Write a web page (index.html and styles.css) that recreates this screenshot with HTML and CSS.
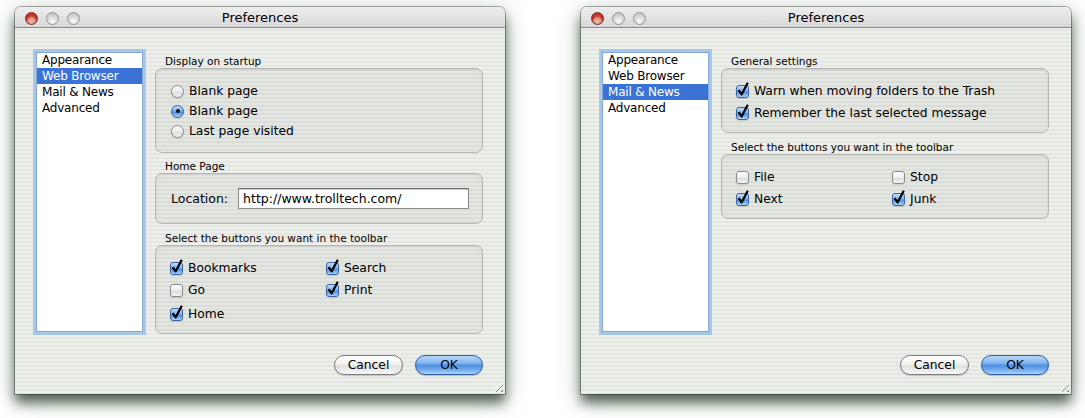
FILE: index.html
```html
<!DOCTYPE html>
<html>
<head>
<meta charset="utf-8">
<title>Preferences</title>
<link rel="stylesheet" href="styles.css">
</head>
<body>
<div class="desk">
  <div class="window">
    <div class="titlebar">
      <div class="lights"><span class="light close"></span><span class="light"></span><span class="light"></span></div>
      <div class="title">Preferences</div>
      <div></div>
    </div>
    <div class="body">
      <div class="main">
        <ul class="list">
          <li>Appearance</li>
          <li class="sel">Web Browser</li>
          <li>Mail &amp; News</li>
          <li>Advanced</li>
        </ul>
        <div class="pane">
          <div class="glabel first">Display on startup</div>
          <div class="group g-startup">
            <div class="opt"><span class="radio"></span>Blank page</div>
            <div class="opt"><span class="radio on"></span>Blank page</div>
            <div class="opt"><span class="radio"></span>Last page visited</div>
          </div>
          <div class="glabel">Home Page</div>
          <div class="group g-home">
            <span class="loc">Location:</span>
            <input class="field" type="text" value="http://www.trolltech.com/">
          </div>
          <div class="glabel l3">Select the buttons you want in the toolbar</div>
          <div class="group g-tools">
            <div class="opt c"><span class="cb on"><svg class="tick" width="14" height="16" viewBox="0 0 14 16"><path d="M2.6 8.2 L5.6 12.4 L11.8 0.8" fill="none" stroke="#000" stroke-width="2.2" stroke-linejoin="round"/></svg></span>Bookmarks</div>
            <div class="opt c"><span class="cb on"><svg class="tick" width="14" height="16" viewBox="0 0 14 16"><path d="M2.6 8.2 L5.6 12.4 L11.8 0.8" fill="none" stroke="#000" stroke-width="2.2" stroke-linejoin="round"/></svg></span>Search</div>
            <div class="opt c"><span class="cb"></span>Go</div>
            <div class="opt c"><span class="cb on"><svg class="tick" width="14" height="16" viewBox="0 0 14 16"><path d="M2.6 8.2 L5.6 12.4 L11.8 0.8" fill="none" stroke="#000" stroke-width="2.2" stroke-linejoin="round"/></svg></span>Print</div>
            <div class="opt c"><span class="cb on"><svg class="tick" width="14" height="16" viewBox="0 0 14 16"><path d="M2.6 8.2 L5.6 12.4 L11.8 0.8" fill="none" stroke="#000" stroke-width="2.2" stroke-linejoin="round"/></svg></span>Home</div>
          </div>
        </div>
      </div>
      <div class="buttons">
        <div class="btn cancel">Cancel</div>
        <div class="btn ok">OK</div>
      </div>
    </div>
    <div class="grip"></div>
  </div>

  <div class="window">
    <div class="titlebar">
      <div class="lights"><span class="light close"></span><span class="light"></span><span class="light"></span></div>
      <div class="title">Preferences</div>
      <div></div>
    </div>
    <div class="body">
      <div class="main">
        <ul class="list">
          <li>Appearance</li>
          <li>Web Browser</li>
          <li class="sel">Mail &amp; News</li>
          <li>Advanced</li>
        </ul>
        <div class="pane">
          <div class="glabel first">General settings</div>
          <div class="group g-general">
            <div class="opt c"><span class="cb on"><svg class="tick" width="14" height="16" viewBox="0 0 14 16"><path d="M2.6 8.2 L5.6 12.4 L11.8 0.8" fill="none" stroke="#000" stroke-width="2.2" stroke-linejoin="round"/></svg></span>Warn when moving folders to the Trash</div>
            <div class="opt c"><span class="cb on"><svg class="tick" width="14" height="16" viewBox="0 0 14 16"><path d="M2.6 8.2 L5.6 12.4 L11.8 0.8" fill="none" stroke="#000" stroke-width="2.2" stroke-linejoin="round"/></svg></span>Remember the last selected message</div>
          </div>
          <div class="glabel l3">Select the buttons you want in the toolbar</div>
          <div class="group g-mailtools">
            <div class="opt c"><span class="cb"></span>File</div>
            <div class="opt c"><span class="cb"></span>Stop</div>
            <div class="opt c"><span class="cb on"><svg class="tick" width="14" height="16" viewBox="0 0 14 16"><path d="M2.6 8.2 L5.6 12.4 L11.8 0.8" fill="none" stroke="#000" stroke-width="2.2" stroke-linejoin="round"/></svg></span>Next</div>
            <div class="opt c"><span class="cb on"><svg class="tick" width="14" height="16" viewBox="0 0 14 16"><path d="M2.6 8.2 L5.6 12.4 L11.8 0.8" fill="none" stroke="#000" stroke-width="2.2" stroke-linejoin="round"/></svg></span>Junk</div>
          </div>
        </div>
      </div>
      <div class="buttons">
        <div class="btn cancel">Cancel</div>
        <div class="btn ok">OK</div>
      </div>
    </div>
    <div class="grip"></div>
  </div>
</div>
</body>
</html>
```

FILE: styles.css
```css
html, body {
  margin: 0;
  background: #ffffff;
}
body {
  min-height: 418px;
  font-family: "DejaVu Sans", "Noto Sans", sans-serif;
  font-size: 12px;
  color: #000;
}
.desk {
  display: flex;
  gap: 76px;
  padding: 7px 0 24px 15px;
}
.window {
  position: relative;
  width: 490px;
  height: 387px;
  flex: none;
  box-sizing: border-box;
  display: flex;
  flex-direction: column;
  border-radius: 6px 6px 0 0;
  background: repeating-linear-gradient(to bottom, #edefeb 0px, #edefeb 2px, #e3e6e1 2px, #e3e6e1 4px);
  box-shadow:
    0 0 0 1px rgba(0, 0, 0, 0.32),
    0 9px 12px rgba(15, 25, 15, 0.6),
    0 5px 24px rgba(70, 110, 70, 0.4);
}
.titlebar {
  height: 21px;
  box-sizing: border-box;
  border-bottom: 1px solid #8a8a8a;
  border-radius: 6px 6px 0 0;
  display: grid;
  grid-template-columns: 1fr auto 1fr;
  align-items: center;
  background:
    repeating-linear-gradient(to bottom, rgba(255, 255, 255, 0.22) 0px, rgba(255, 255, 255, 0.22) 1px, transparent 1px, transparent 2px),
    linear-gradient(to bottom, #ececec, #d3d3d3);
}
.lights {
  display: flex;
  gap: 8px;
  padding-left: 10px;
  padding-top: 1px;
}
.light {
  width: 13px;
  height: 13px;
  box-sizing: border-box;
  border-radius: 50%;
  border: 1px solid #969696;
  background: radial-gradient(circle at 50% 75%, #fbfbfb 0%, #dcdcdc 45%, #c4c4c4 80%, #b8b8b8 100%);
}
.light.close {
  border-color: #7d2e25;
  background:
    radial-gradient(circle at 50% 78%, #f2c1b1 0%, #d98a78 38%, transparent 55%),
    radial-gradient(circle at 50% 40%, #d8433a 0%, #c02a20 60%, #8f1a12 100%);
}
.title {
  font-size: 13px;
  line-height: 20px;
  padding-top: 1px;
}
.body {
  flex: 1;
  display: flex;
  flex-direction: column;
  padding: 21px 22px 0 18px;
}
.main {
  display: flex;
  gap: 9px;
  height: 286px;
}
.list {
  list-style: none;
  margin: 0;
  width: 113px;
  height: 286px;
  box-sizing: border-box;
  border: 3px solid #a7c6e8;
  box-shadow: inset 0 0 0 1px #84a9d6;
  padding: 0 1px;
  background: #fff;
}
.list li {
  height: 16px;
  line-height: 16px;
  padding-left: 5px;
  letter-spacing: -0.2px;
}
.list li.sel {
  background: #3a72d6;
  color: #fff;
}
.pane {
  width: 328px;
  display: flex;
  flex-direction: column;
}
.glabel {
  font-size: 10.5px;
  line-height: 14px;
  height: 14px;
  padding-left: 10px;
  margin-top: 6px;
}
.glabel.first {
  margin-top: 5px;
}
.glabel.l3 {
  margin-top: 7px;
}
.group {
  box-sizing: border-box;
  border: 1px solid #b3b6b1;
  border-radius: 7px;
  background: rgba(0, 0, 0, 0.035);
  box-shadow: inset 0 1px 2px rgba(0, 0, 0, 0.08);
}
.g-startup {
  height: 85px;
  padding: 12px 0 0 15px;
}
.g-home {
  height: 51px;
  padding: 14px 13px 0 15px;
  display: flex;
  align-items: flex-start;
  gap: 10px;
}
.loc {
  line-height: 21px;
  font-size: 12.5px;
}
.field {
  flex: 1;
  height: 21px;
  box-sizing: border-box;
  margin: 0;
  border: 1px solid #8c8c8c;
  border-top-color: #6e6e6e;
  box-shadow: inset 0 1px 1px rgba(0, 0, 0, 0.22);
  background: #fff;
  padding: 0 0 0 4px;
  font-family: "DejaVu Sans", sans-serif;
  font-size: 12.5px;
  color: #000;
  outline: none;
}
.g-tools {
  height: 89px;
  padding: 11px 0 0 14px;
  display: grid;
  grid-template-columns: 156px 1fr;
  grid-template-rows: 22px 22px 26px;
  align-items: center;
}
.g-general {
  height: 65px;
  padding: 11px 0 0 14px;
  display: grid;
  grid-template-rows: 22px 22px;
  align-items: center;
}
.g-mailtools {
  height: 65px;
  padding: 11px 0 0 14px;
  display: grid;
  grid-template-columns: 156px 1fr;
  grid-template-rows: 22px 22px;
  align-items: center;
}
.opt {
  display: flex;
  align-items: center;
  gap: 5px;
  height: 20px;
  font-size: 12.3px;
  white-space: nowrap;
}
.opt.c {
  height: 22px;
}
.radio {
  width: 13px;
  height: 13px;
  box-sizing: border-box;
  border-radius: 50%;
  border: 1px solid #8a8a8a;
  background: linear-gradient(to bottom, #ffffff 0%, #ececec 50%, #dcdcdc 60%, #f6f6f6 100%);
  box-shadow: 0 1px 1px rgba(0, 0, 0, 0.12);
  display: flex;
  align-items: center;
  justify-content: center;
}
.radio.on {
  border-color: #3b63a0;
  background: linear-gradient(to bottom, #c3dcf8 0%, #7fb2ee 45%, #4b8de2 55%, #a7d3fb 100%);
}
.radio.on::after {
  content: "";
  width: 4px;
  height: 4px;
  border-radius: 50%;
  background: #111;
}
.cb {
  position: relative;
  width: 13px;
  height: 13px;
  box-sizing: border-box;
  border-radius: 3px;
  border: 1px solid #8a8a8a;
  background: linear-gradient(to bottom, #ffffff 0%, #ededed 50%, #dcdcdc 58%, #f5f5f5 100%);
  box-shadow: 0 1px 1px rgba(0, 0, 0, 0.12);
  flex: none;
}
.cb.on {
  border-color: #3d65a3;
  background: linear-gradient(to bottom, #c3dcf8 0%, #7fb2ee 45%, #4b8de2 55%, #a7d3fb 100%);
}
.tick {
  position: absolute;
  left: -1px;
  top: -4px;
}
.buttons {
  display: flex;
  justify-content: flex-end;
  gap: 12px;
  margin-top: 20px;
}
.btn {
  height: 20px;
  box-sizing: border-box;
  border-radius: 10px;
  text-align: center;
  line-height: 18px;
  font-size: 12.3px;
}
.cancel {
  width: 69px;
  border: 1px solid #7c7c7c;
  background: linear-gradient(to bottom, #ffffff 0%, #f2f2f2 45%, #e0e0e0 55%, #f7f7f7 100%);
  box-shadow: 0 1px 1px rgba(0, 0, 0, 0.18);
}
.ok {
  width: 68px;
  border: 1px solid #2f5d9f;
  background: linear-gradient(to bottom, #b6d6f8 0%, #7fb3ef 40%, #4f8fe0 52%, #6ea9ec 75%, #a9d5fb 100%);
  box-shadow: 0 1px 1px rgba(0, 0, 0, 0.22);
}
.grip {
  position: absolute;
  right: 2px;
  bottom: 2px;
  width: 11px;
  height: 11px;
  background: repeating-linear-gradient(135deg, transparent 0px, transparent 2px, #8e8e8e 2px, #8e8e8e 3px, #fafafa 3px, #fafafa 4px);
  clip-path: polygon(100% 0, 100% 100%, 0 100%);
}
```
